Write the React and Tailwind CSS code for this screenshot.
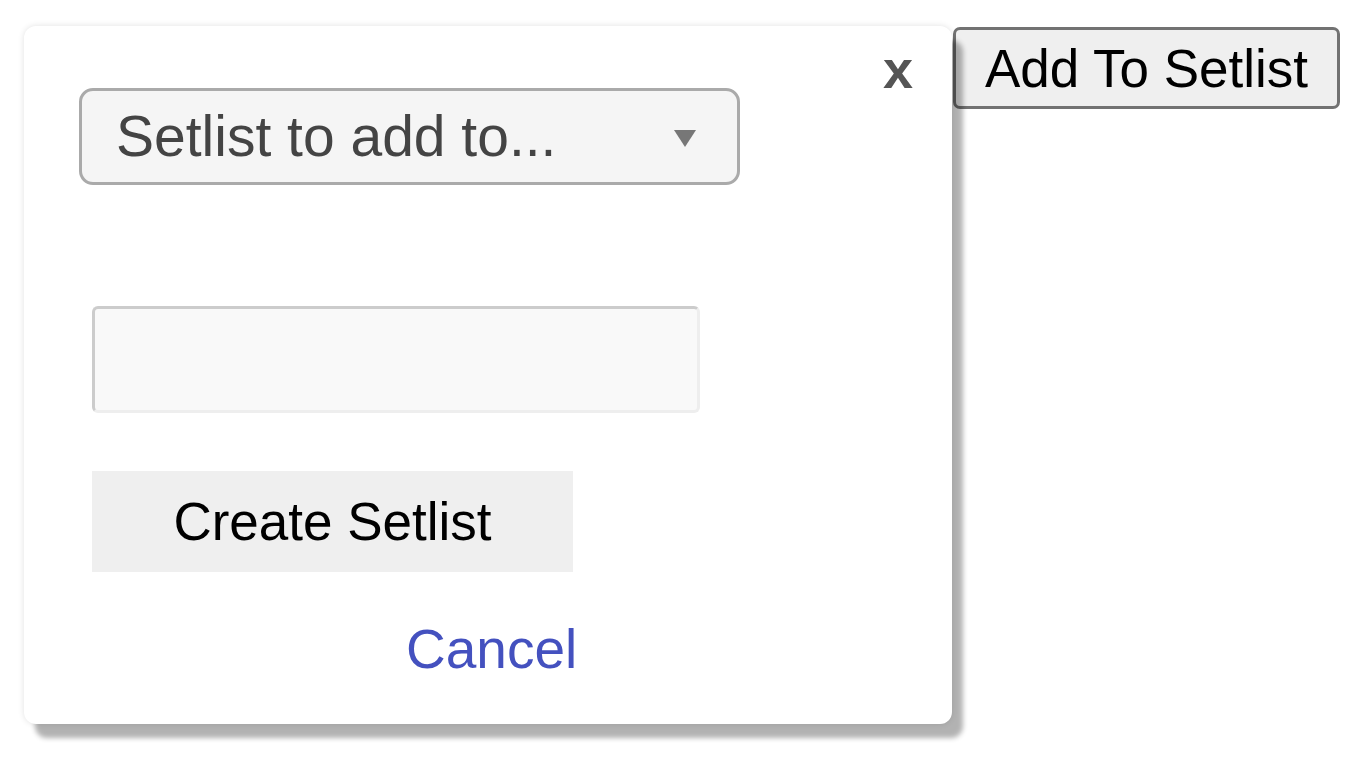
import React, { useState } from 'react';

const font = { fontFamily: '"Liberation Sans", Arial, Helvetica, sans-serif' };

const SetlistModal = ({ onClose }) => {
  const [setlist, setSetlist] = useState('');
  const [name, setName] = useState('');

  return (
    <div className="relative ml-[24px] mt-[26px] h-[698px] w-[928px] shrink-0 rounded-[12px] bg-white shadow-[11px_14px_5px_rgba(0,0,0,0.3),0_0_6px_rgba(0,0,0,0.12)]">
      {/* close */}
      <button
        type="button"
        onClick={onClose}
        className="absolute right-[39px] top-[16px] text-[54px] font-bold leading-none text-[#555]"
      >
        x
      </button>

      <div className="flex flex-col pl-[55px] pt-[62px]">
        <div className="relative h-[97px] w-[661px]">
          <select
            value={setlist}
            onChange={(e) => setSetlist(e.target.value)}
            className="h-full w-full appearance-none rounded-[14px] border-[3px] border-[#aaa] bg-[#f5f5f5] pl-[34px] text-[57px] text-[#444] outline-none"
          >
            <option value="">Setlist to add to...</option>
          </select>
          <svg
            className="pointer-events-none absolute right-[43px] top-[41px]"
            width="24"
            height="19"
            viewBox="0 0 24 19"
          >
            <path d="M1 1 L23 1 L12 18 Z" fill="#777" />
          </svg>
        </div>

        <input
          type="text"
          value={name}
          onChange={(e) => setName(e.target.value)}
          className="ml-[13px] mt-[121px] h-[107px] w-[608px] rounded-[6px] border-[3px] border-b-[#eee] border-l-[#ccc] border-r-[#eee] border-t-[#ccc] bg-[#f9f9f9] px-3 text-[52px] outline-none"
        />

        <button
          type="button"
          className="ml-[13px] mt-[58px] flex h-[101px] w-[481px] items-center justify-center bg-[#efefef] text-[53px] text-black"
        >
          Create Setlist
        </button>

        <a
          href="#"
          onClick={(e) => {
            e.preventDefault();
            onClose && onClose();
          }}
          className="ml-[327px] mt-[50px] block w-fit text-[55px] leading-none text-[#4451bf]"
        >
          Cancel
        </a>
      </div>
    </div>
  );
};

export default function App() {
  const [open, setOpen] = useState(true);

  return (
    <div className="flex min-h-[760px] items-start bg-white" style={font}>
      {open ? <SetlistModal onClose={() => setOpen(false)} /> : <div className="ml-[24px] w-[928px] shrink-0" />}
      <button
        type="button"
        onClick={() => setOpen(true)}
        className="ml-[1px] mt-[27px] flex h-[82px] w-[387px] items-center justify-center rounded-[7px] border-[3px] border-[#727272] bg-[#efefef] text-[53px] leading-none text-black"
      >
        Add To Setlist
      </button>
    </div>
  );
}
